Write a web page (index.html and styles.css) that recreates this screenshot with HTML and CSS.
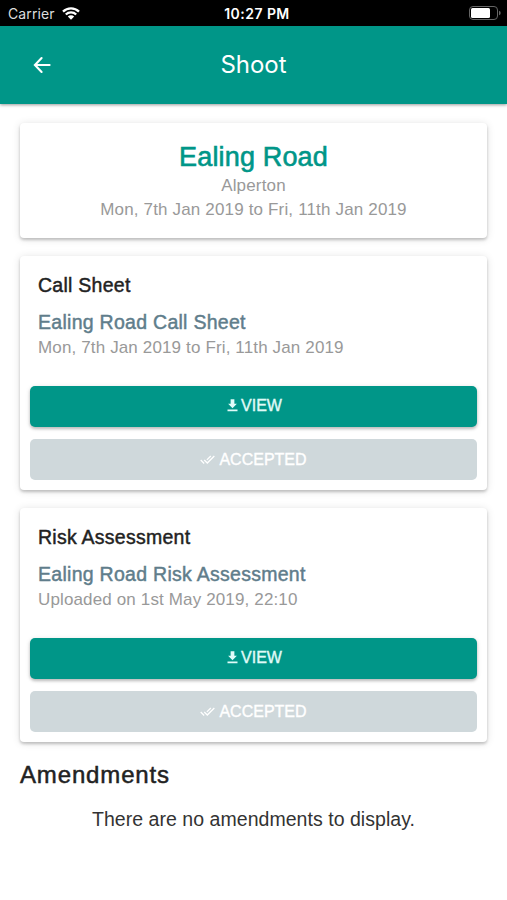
FILE: index.html
```html
<!DOCTYPE html>
<html lang="en">
<head>
<meta charset="utf-8">
<title>Shoot</title>
<link rel="stylesheet" href="styles.css">
</head>
<body>
<div class="status">
  <div class="carrier"><span>Carrier</span>
    <svg class="wifi" viewBox="0 0 18 13"><path d="M1 4.6a11.4 11.4 0 0 1 16 0M3.8 7.5a7.4 7.4 0 0 1 10.4 0" fill="none" stroke="#fff" stroke-width="2.3"/><path d="M5.8 9.6a4.5 4.5 0 0 1 6.4 0L9 12.8z" fill="#fff"/></svg>
  </div>
  <span class="time">10:27 PM</span>
  <svg class="battery" viewBox="0 0 32 14"><rect x=".5" y=".5" width="28" height="13" rx="3.5" fill="none" stroke="#666"/><rect x="2" y="2" width="19" height="10" rx="1.5" fill="#fff"/><path d="M30 4.8q1.7.5 1.7 2.2t-1.7 2.2z" fill="#666"/></svg>
</div>
<header class="bar">
  <svg class="back" viewBox="0 0 24 24"><path d="M19.6 12H5M11.6 5L4.9 12l6.7 7" fill="none" stroke="#fff" stroke-width="2.1" stroke-linecap="round"/></svg>
  <h1>Shoot</h1>
</header>
<main>
  <section class="card summary">
    <h2>Ealing Road</h2>
    <p class="place">Alperton</p>
    <p class="dates">Mon, 7th Jan 2019 to Fri, 11th Jan 2019</p>
  </section>
  <section class="card doc">
    <h3>Call Sheet</h3>
    <h4>Ealing Road Call Sheet</h4>
    <p>Mon, 7th Jan 2019 to Fri, 11th Jan 2019</p>
    <button class="view"><svg viewBox="0 0 24 24"><path d="M19 9h-4V2H9v7H5l7 7.5L19 9zM4 18.5V21h16v-2.5H4z"/></svg><span>VIEW</span></button>
    <button class="accepted"><svg viewBox="0 0 24 24"><path d="M18 7l-1.41-1.41-6.34 6.34 1.41 1.41L18 7zm4.24-1.41L11.66 16.17 7.48 12l-1.41 1.41L11.66 19l12-12-1.42-1.41zM.41 13.41L6 19l1.41-1.41L1.83 12 .41 13.41z"/></svg><span>ACCEPTED</span></button>
  </section>
  <section class="card doc">
    <h3>Risk Assessment</h3>
    <h4>Ealing Road Risk Assessment</h4>
    <p>Uploaded on 1st May 2019, 22:10</p>
    <button class="view"><svg viewBox="0 0 24 24"><path d="M19 9h-4V2H9v7H5l7 7.5L19 9zM4 18.5V21h16v-2.5H4z"/></svg><span>VIEW</span></button>
    <button class="accepted"><svg viewBox="0 0 24 24"><path d="M18 7l-1.41-1.41-6.34 6.34 1.41 1.41L18 7zm4.24-1.41L11.66 16.17 7.48 12l-1.41 1.41L11.66 19l12-12-1.42-1.41zM.41 13.41L6 19l1.41-1.41L1.83 12 .41 13.41z"/></svg><span>ACCEPTED</span></button>
  </section>
  <h2 class="amend">Amendments</h2>
  <p class="empty">There are no amendments to display.</p>
</main>
</body>
</html>
```

FILE: styles.css
```css
* { box-sizing: border-box; margin: 0; padding: 0; }
body { width: 507px; height: 900px; overflow: hidden; background: #fff; font-family: "Liberation Sans", Arial, sans-serif; color: #222; }
h1, h2, h3, h4 { font-weight: 400; white-space: nowrap; }
p { white-space: nowrap; }
.status { height: 26px; background: #000; color: #fff; display: grid; grid-template-columns: 1fr auto 1fr; align-items: center; padding: 0 6px 0 8px; font: 14px Inter, sans-serif; }
.carrier { display: flex; align-items: center; gap: 7px; color: #ddd; letter-spacing: .1px; }
.wifi { width: 18px; height: 13px; }
.time { font-weight: 600; font-size: 14px; letter-spacing: .45px; padding-left: 5px; }
.battery { width: 32px; height: 14px; justify-self: end; }
.bar { height: 78px; background: #009688; color: #fff; display: grid; grid-template-columns: 84px 1fr 84px; align-items: center; box-shadow: 0 1px 3px rgba(0,0,0,.4); }
.back { width: 24px; height: 24px; margin-left: 30px; }
.bar h1 { font: 400 24px Inter, sans-serif; text-align: center; padding-bottom: 2px; }
main { padding: 19px 20px 0; }
.card { border-radius: 4px; background: #fff; box-shadow: 0 2px 3px rgba(0,0,0,.2), 0 1px 9px rgba(0,0,0,.12); margin-bottom: 18px; }
.summary { height: 115px; padding-top: 17px; text-align: center; color: #999; font-size: 17px; letter-spacing: .16px; }
.summary h2 { color: #009688; font-size: 27px; line-height: 34px; -webkit-text-stroke: .6px; }
.summary p { line-height: 24px; }
.doc { height: 234px; padding: 16px 10px 0; }
.doc h3 { margin-left: 8px; font-size: 19.5px; line-height: 26px; letter-spacing: .26px; -webkit-text-stroke: .45px; }
.doc h4 { margin: 11px 0 0 8px; font-size: 19.5px; line-height: 26px; letter-spacing: .28px; color: #607d8b; -webkit-text-stroke: .45px; }
.doc p { margin: 1px 0 0 8px; font-size: 17px; line-height: 24px; letter-spacing: .14px; color: #999; }
button { width: 100%; height: 41px; border: 0; border-radius: 5px; display: flex; align-items: center; justify-content: center; color: #fff; font: 16px "Liberation Sans", Arial, sans-serif; }
button span { -webkit-text-stroke: .35px; }
button svg { width: 15px; height: 15px; fill: currentColor; }
.view { margin-top: 26px; padding-bottom: 1px; background: #009688; color: #e0fbf8; gap: 1px; box-shadow: 0 2px 3px rgba(0,0,0,.2), 0 1px 5px rgba(0,0,0,.12); }
.view svg { margin-bottom: 1px; }
.accepted { margin-top: 12px; background: #cfd8db; gap: 4px; }
.amend { font-size: 24px; line-height: 30px; letter-spacing: .85px; -webkit-text-stroke: .5px; }
.empty { margin-top: 15px; text-align: center; font-size: 19.5px; line-height: 28px; letter-spacing: .04px; color: #333; }
```
